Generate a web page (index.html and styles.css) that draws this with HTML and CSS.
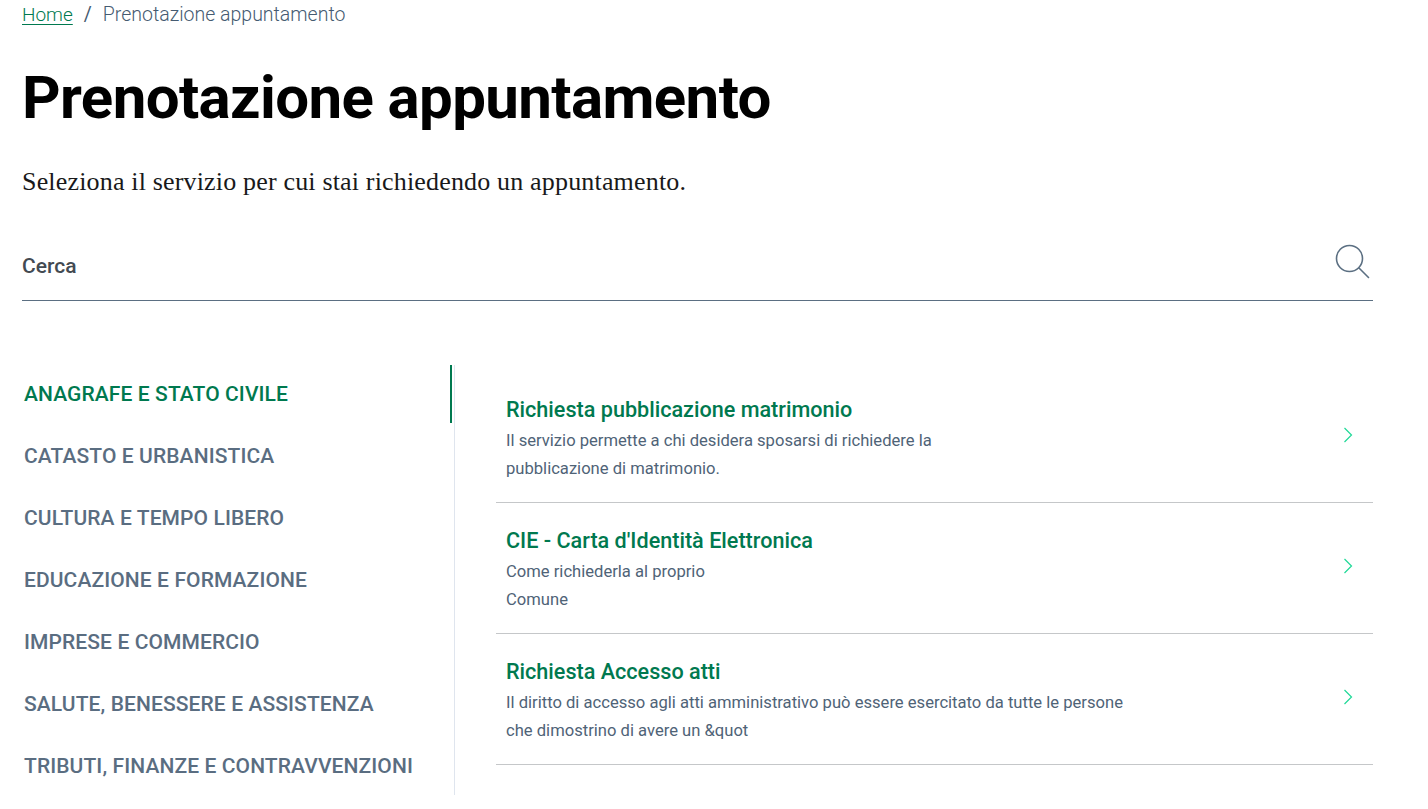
FILE: index.html
```html
<!DOCTYPE html>
<html lang="it">
<head>
<meta charset="utf-8">
<title>Prenotazione appuntamento</title>
<link rel="stylesheet" href="styles.css">
</head>
<body>
<main class="page">
  <nav class="crumbs"><a class="crumb-link" href="#">Home</a><span class="crumb-sep">/</span><span class="crumb-current">Prenotazione appuntamento</span></nav>
  <h1 class="title">Prenotazione appuntamento</h1>
  <p class="lead">Seleziona il servizio per cui stai richiedendo un appuntamento.</p>
  <div class="search">
    <span class="search-label">Cerca</span>
    <svg class="search-icon" width="36" height="36" viewBox="0 0 36 36" fill="none"><circle cx="15.5" cy="14.5" r="13" stroke="#5b6f82" stroke-width="1.6"/><path d="M25 24l9.5 9.5" stroke="#5b6f82" stroke-width="1.6" stroke-linecap="round"/></svg>
  </div>
  <div class="columns">
    <ul class="cats">
      <li class="cat cat-active">ANAGRAFE E STATO CIVILE</li>
      <li class="cat">CATASTO E URBANISTICA</li>
      <li class="cat">CULTURA E TEMPO LIBERO</li>
      <li class="cat">EDUCAZIONE E FORMAZIONE</li>
      <li class="cat">IMPRESE E COMMERCIO</li>
      <li class="cat">SALUTE, BENESSERE E ASSISTENZA</li>
      <li class="cat">TRIBUTI, FINANZE E CONTRAVVENZIONI</li>
    </ul>
    <div class="services">
      <a class="service" href="#">
        <div class="service-text">
          <h2 class="service-title">Richiesta pubblicazione matrimonio</h2>
          <p class="service-desc">Il servizio permette a chi desidera sposarsi di richiedere la<br>pubblicazione di matrimonio.</p>
        </div>
        <svg class="chev" width="10" height="16" viewBox="0 0 10 16" fill="none"><path d="M1.5 1l7 7-7 7" stroke="#1fd997" stroke-width="1.2"/></svg>
      </a>
      <a class="service" href="#">
        <div class="service-text">
          <h2 class="service-title">CIE - Carta d'Identità Elettronica</h2>
          <p class="service-desc">Come richiederla al proprio<br>Comune</p>
        </div>
        <svg class="chev" width="10" height="16" viewBox="0 0 10 16" fill="none"><path d="M1.5 1l7 7-7 7" stroke="#1fd997" stroke-width="1.2"/></svg>
      </a>
      <a class="service" href="#">
        <div class="service-text">
          <h2 class="service-title">Richiesta Accesso atti</h2>
          <p class="service-desc">Il diritto di accesso agli atti amministrativo può essere esercitato da tutte le persone<br>che dimostrino di avere un &amp;quot</p>
        </div>
        <svg class="chev" width="10" height="16" viewBox="0 0 10 16" fill="none"><path d="M1.5 1l7 7-7 7" stroke="#1fd997" stroke-width="1.2"/></svg>
      </a>
    </div>
  </div>
</main>
</body>
</html>
```
FILE: styles.css
```css
* { box-sizing: border-box; }
html, body { margin: 0; padding: 0; height: 100%; overflow: hidden; background: #fff; }
body { font-family: "Roboto", "Liberation Sans", sans-serif; }
.page { padding: 0 55px 0 22px; }
.crumbs { display: flex; align-items: center; height: 28px; font-size: 19.5px; color: #455b71; font-weight: 300; }
.crumb-link { color: #00794f; text-decoration: underline; text-underline-offset: 3px; font-size: 19px; }
.crumb-sep { margin: 0 11px; font-weight: 400; }
.title { margin: 30px 0 0; font-size: 60px; line-height: 80px; font-weight: 700; color: #000; letter-spacing: -0.62px; }
.lead { margin: 28px 0 0; font-family: "Liberation Serif", serif; font-size: 26px; line-height: 32px; letter-spacing: 0.17px; color: #19191a; }
.search { display: flex; align-items: center; justify-content: space-between; height: 70px; margin-top: 33px; border-bottom: 1px solid #5b6f82; padding-right: 3px; }
.search-label { font-size: 21px; font-weight: 500; color: #434a52; }
.search-icon { display: block; margin-top: -7px; }
.columns { display: flex; margin-top: 64px; }
.cats { list-style: none; margin: 0; padding: 0; width: 433px; border-right: 1px solid #dfe5ee; flex: none; height: 430px; }
.cat { height: 58px; margin-bottom: 4px; padding: 0 2px; display: flex; align-items: center; font-size: 21px; letter-spacing: 0.1px; font-weight: 500; color: #5a6d81; margin-right: 2px; }
.cat-active { color: #00794f; border-right: 2px solid #00794f; }
.services { flex: 1; margin-left: 41px; padding-top: 7px; }
.service { display: flex; align-items: center; justify-content: space-between; height: 131px; padding: 0 20px 0 10px; border-bottom: 1px solid #c5c7c9; text-decoration: none; }
.service-text { padding-top: 4px; }
.service-title { margin: 0 0 2px; font-size: 21.6px; line-height: 30px; font-weight: 500; color: #00794f; }
.service-desc { margin: 0; font-size: 16.6px; line-height: 28px; color: #4f6377; font-weight: 400; }
.chev { display: block; flex: none; margin-top: -4px; }
```
